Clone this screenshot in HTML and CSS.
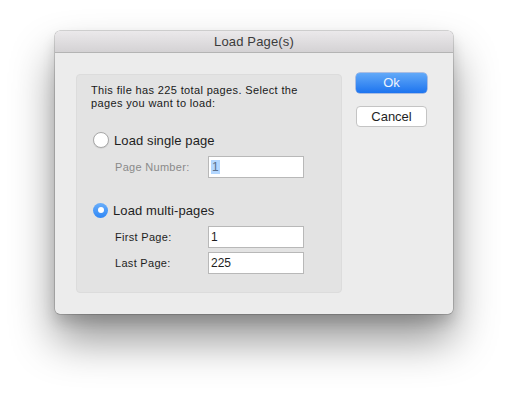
FILE: index.html
```html
<!DOCTYPE html>
<html>
<head>
<meta charset="utf-8">
<link rel="stylesheet" href="styles.css">
</head>
<body>
<div class="window">
  <div class="titlebar">Load Page(s)</div>
  <div class="content">
    <div class="group">
      <p class="intro">This file has 225 total pages. Select the pages you want to load:</p>
      <div class="radio-row first-radio">
        <span class="radio"></span>
        <span class="radio-label">Load single page</span>
      </div>
      <div class="field-row single-field">
        <span class="field-label disabled">Page Number:</span>
        <span class="input"><span class="selected">1</span></span>
      </div>
      <div class="radio-row second-radio">
        <span class="radio checked"></span>
        <span class="radio-label">Load multi-pages</span>
      </div>
      <div class="field-row first-field">
        <span class="field-label">First Page:</span>
        <span class="input">1</span>
      </div>
      <div class="field-row last-field">
        <span class="field-label">Last Page:</span>
        <span class="input">225</span>
      </div>
    </div>
    <div class="buttons">
      <div class="btn btn-primary">Ok</div>
      <div class="btn btn-default">Cancel</div>
    </div>
  </div>
</div>
</body>
</html>
```
FILE: styles.css
```css
html, body {
  margin: 0;
  padding: 0;
  background: #ffffff;
}
body {
  width: 509px;
  height: 394px;
  overflow: hidden;
  font-family: "Liberation Sans", Arial, sans-serif;
  color: #1e1e1e;
}
.window {
  margin: 31px 0 0 55px;
  width: 398px;
  height: 283px;
  background: #ececec;
  border-radius: 5px;
  box-shadow: 0 0 0 0.5px rgba(0,0,0,0.3), 0 26px 44px rgba(0,0,0,0.42), 0 8px 14px rgba(0,0,0,0.14);
  overflow: hidden;
  box-sizing: border-box;
}
.titlebar {
  height: 21px;
  line-height: 22px;
  text-align: center;
  font-size: 13px;
  color: #3b3b3b;
  background: linear-gradient(#ebe9eb, #d4d2d4);
  border-bottom: 1px solid #b4b4b4;
  letter-spacing: 0.15px;
}
.content {
  display: flex;
  align-items: flex-start;
  padding: 21px 0 0 21px;
}
.group {
  width: 266px;
  height: 219px;
  box-sizing: border-box;
  background: #e3e3e3;
  border: 1px solid #dcdcdc;
  border-radius: 4px;
  padding: 9px 14px 0 14px;
}
.intro {
  margin: 0;
  font-size: 11px;
  line-height: 13px;
  color: #1a1a1a;
  width: 232px;
  letter-spacing: 0.36px;
}
.radio-row {
  display: flex;
  align-items: center;
  height: 16px;
  margin-left: 2px;
}
.first-radio { margin-top: 22px; }
.second-radio { margin-top: 24px; }
.radio {
  width: 14px;
  height: 14px;
  border-radius: 50%;
  background: #ffffff;
  border: 0.5px solid #a9a9a9;
  box-shadow: 0 0.5px 1px rgba(0,0,0,0.12);
  position: relative;
  flex: none;
}
.radio.checked {
  width: 15px;
  height: 15px;
  border: none;
  background: linear-gradient(#6aaefa, #2f87f5);
  box-shadow: none;
}
.radio.checked::after {
  content: "";
  position: absolute;
  left: 4.5px;
  top: 4.5px;
  width: 6px;
  height: 6px;
  border-radius: 50%;
  background: #ffffff;
}
.radio-label {
  margin-left: 5px;
  font-size: 13px;
  color: #1e1e1e;
  letter-spacing: 0.1px;
}
.field-row {
  display: flex;
  align-items: center;
  height: 22px;
  padding-left: 24px;
}
.single-field { margin-top: 8px; }
.first-field { margin-top: 8px; }
.last-field { margin-top: 4px; }
.field-label {
  width: 93px;
  font-size: 11px;
  color: #1e1e1e;
  letter-spacing: 0.3px;
}
.field-label.disabled { color: #8a8a8a; }
.input {
  width: 96px;
  height: 22px;
  box-sizing: border-box;
  background: #ffffff;
  border: 1px solid #b8b8b8;
  font-size: 12px;
  line-height: 20px;
  padding-left: 2px;
  color: #1e1e1e;
}
.selected {
  background: #b3d7ff;
  color: #5a6f8a;
  padding: 0 1px;
}
.buttons {
  display: flex;
  flex-direction: column;
  margin-left: 14px;
  margin-top: -1px;
}
.btn {
  width: 71px;
  height: 20px;
  box-sizing: border-box;
  border-radius: 4px;
  text-align: center;
  font-size: 13px;
  line-height: 20px;
}
.btn-primary {
  background: linear-gradient(#62a9f8, #1d74ef);
  color: #eef4fd;
  box-shadow: 0 0 0 0.5px rgba(20,80,200,0.6);
}
.btn-default {
  margin-top: 13px;
  height: 21px;
  background: #ffffff;
  color: #1e1e1e;
  border: 1px solid #c4c4c4;
  line-height: 19px;
}
```
